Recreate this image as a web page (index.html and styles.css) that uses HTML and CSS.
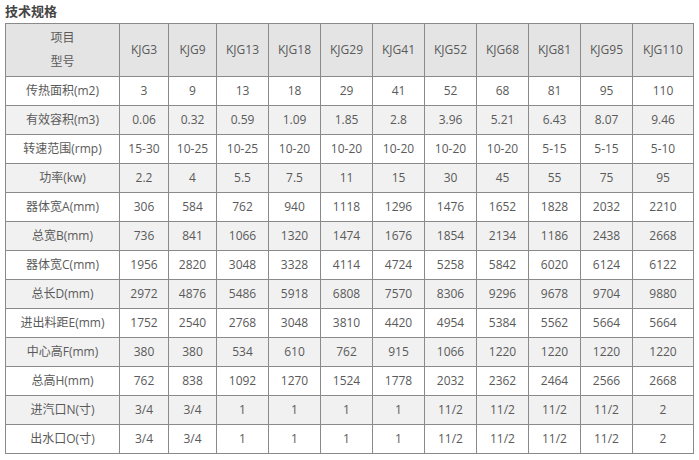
FILE: index.html
```html
<!DOCTYPE html>
<html lang="zh">
<head>
<meta charset="utf-8">
<link rel="stylesheet" href="styles.css">
</head>
<body>
<h3 class="title">技术规格</h3>
<table class="spec">
<colgroup>
<col class="c-name"><col class="c-a"><col class="c-b"><col class="c-n"><col class="c-n"><col class="c-n"><col class="c-n"><col class="c-n"><col class="c-n"><col class="c-n"><col class="c-n"><col class="c-last">
</colgroup>
<thead>
<tr class="head"><th class="stack"><span>项目</span><span>型号</span></th><th>KJG3</th><th>KJG9</th><th>KJG13</th><th>KJG18</th><th>KJG29</th><th>KJG41</th><th>KJG52</th><th>KJG68</th><th>KJG81</th><th>KJG95</th><th>KJG110</th></tr>
</thead>
<tbody>
<tr><td>传热面积(m2)</td><td>3</td><td>9</td><td>13</td><td>18</td><td>29</td><td>41</td><td>52</td><td>68</td><td>81</td><td>95</td><td>110</td></tr>
<tr><td>有效容积(m3)</td><td>0.06</td><td>0.32</td><td>0.59</td><td>1.09</td><td>1.85</td><td>2.8</td><td>3.96</td><td>5.21</td><td>6.43</td><td>8.07</td><td>9.46</td></tr>
<tr><td>转速范围(rmp)</td><td>15-30</td><td>10-25</td><td>10-25</td><td>10-20</td><td>10-20</td><td>10-20</td><td>10-20</td><td>10-20</td><td>5-15</td><td>5-15</td><td>5-10</td></tr>
<tr><td>功率(kw)</td><td>2.2</td><td>4</td><td>5.5</td><td>7.5</td><td>11</td><td>15</td><td>30</td><td>45</td><td>55</td><td>75</td><td>95</td></tr>
<tr><td>器体宽A(mm)</td><td>306</td><td>584</td><td>762</td><td>940</td><td>1118</td><td>1296</td><td>1476</td><td>1652</td><td>1828</td><td>2032</td><td>2210</td></tr>
<tr><td>总宽B(mm)</td><td>736</td><td>841</td><td>1066</td><td>1320</td><td>1474</td><td>1676</td><td>1854</td><td>2134</td><td>1186</td><td>2438</td><td>2668</td></tr>
<tr><td>器体宽C(mm)</td><td>1956</td><td>2820</td><td>3048</td><td>3328</td><td>4114</td><td>4724</td><td>5258</td><td>5842</td><td>6020</td><td>6124</td><td>6122</td></tr>
<tr><td>总长D(mm)</td><td>2972</td><td>4876</td><td>5486</td><td>5918</td><td>6808</td><td>7570</td><td>8306</td><td>9296</td><td>9678</td><td>9704</td><td>9880</td></tr>
<tr><td>进出料距E(mm)</td><td>1752</td><td>2540</td><td>2768</td><td>3048</td><td>3810</td><td>4420</td><td>4954</td><td>5384</td><td>5562</td><td>5664</td><td>5664</td></tr>
<tr><td>中心高F(mm)</td><td>380</td><td>380</td><td>534</td><td>610</td><td>762</td><td>915</td><td>1066</td><td>1220</td><td>1220</td><td>1220</td><td>1220</td></tr>
<tr><td>总高H(mm)</td><td>762</td><td>838</td><td>1092</td><td>1270</td><td>1524</td><td>1778</td><td>2032</td><td>2362</td><td>2464</td><td>2566</td><td>2668</td></tr>
<tr><td>进汽口N(寸)</td><td>3/4</td><td>3/4</td><td>1</td><td>1</td><td>1</td><td>1</td><td>11/2</td><td>11/2</td><td>11/2</td><td>11/2</td><td>2</td></tr>
<tr><td>出水口O(寸)</td><td>3/4</td><td>3/4</td><td>1</td><td>1</td><td>1</td><td>1</td><td>11/2</td><td>11/2</td><td>11/2</td><td>11/2</td><td>2</td></tr>
</tbody>
</table>
</body>
</html>
```
FILE: styles.css
```css
html, body {
  margin: 0;
  padding: 0;
  background: #ffffff;
}
body {
  padding: 3px 5px 0 5px;
  font-family: "Open Sans", "Noto Sans CJK SC", sans-serif;
  color: #555555;
}
.title {
  margin: 0;
  font-family: "Noto Sans CJK SC", sans-serif;
  font-size: 13px;
  line-height: 16px;
  font-weight: bold;
  color: #444444;
  height: 20px;
}
.spec {
  border-collapse: collapse;
  table-layout: fixed;
  width: 688px;
  border: 1px solid #3a3a3a;
  font-size: 12px;
}
.c-name { width: 114px; }
.c-a { width: 49px; }
.c-b { width: 48px; }
.c-n { width: 52px; }
.c-last { width: 61px; }
.spec th,
.spec td {
  border: 1px solid #8a8a8a;
  text-align: center;
  padding: 0;
  font-weight: normal;
  color: #5a5a5a;
  height: 28px;
  line-height: 16px;
  white-space: nowrap;
}
.spec .head th {
  background: #e4e4e4;
  height: 52px;
}
.stack span {
  display: block;
  line-height: 24px;
}
.spec tbody tr:nth-child(even) td {
  background: #f1f1f1;
}
.spec tbody tr:nth-child(odd) td {
  background: #ffffff;
}
```
